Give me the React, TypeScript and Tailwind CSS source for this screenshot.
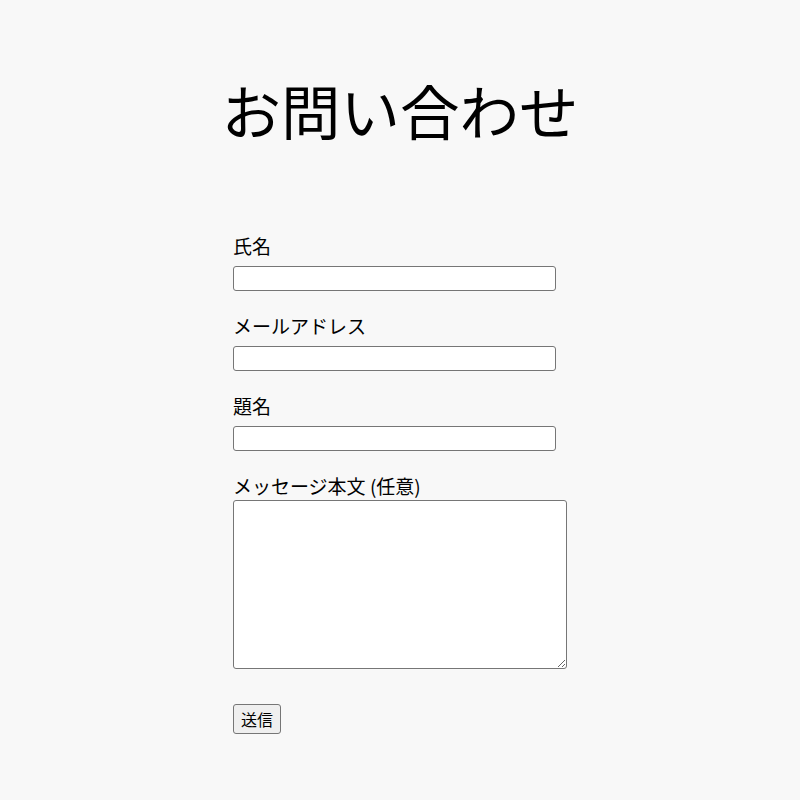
export default function App() {
  const font = { fontFamily: '"Noto Sans CJK JP", "Noto Sans", sans-serif' };
  return (
    <div className="min-h-[800px] w-full bg-[#f8f8f8] text-black" style={font}>
      <h1 className="pt-[73px] text-center text-[59.5px] leading-[72px] font-normal">お問い合わせ</h1>
      <form className="mx-auto mt-[88px] flex w-[334px] flex-col" onSubmit={(e) => e.preventDefault()}>
        <label className="text-[19px] leading-[26px]">氏名</label>
        <input className="mt-[7px] h-[25px] w-[323px] rounded-[3px] border border-[#767676] bg-white" />
        <label className="mt-[22px] text-[19px] leading-[26px]">メールアドレス</label>
        <input className="mt-[7px] h-[25px] w-[323px] rounded-[3px] border border-[#767676] bg-white" />
        <label className="mt-[22px] text-[19px] leading-[26px]">題名</label>
        <input className="mt-[7px] h-[25px] w-[323px] rounded-[3px] border border-[#767676] bg-white" />
        <label className="mt-[22px] text-[19px] leading-[26px]">メッセージ本文 (任意)</label>
        <textarea className="mt-[1px] h-[169px] w-[334px] rounded-[3px] border border-[#767676] bg-white" />
        <div className="mt-[35px]">
          <button className="h-[30px] rounded-[3px] border border-[#767676] bg-[#efefef] px-[7px] text-[16px] leading-[20px]">送信</button>
        </div>
      </form>
    </div>
  );
}
